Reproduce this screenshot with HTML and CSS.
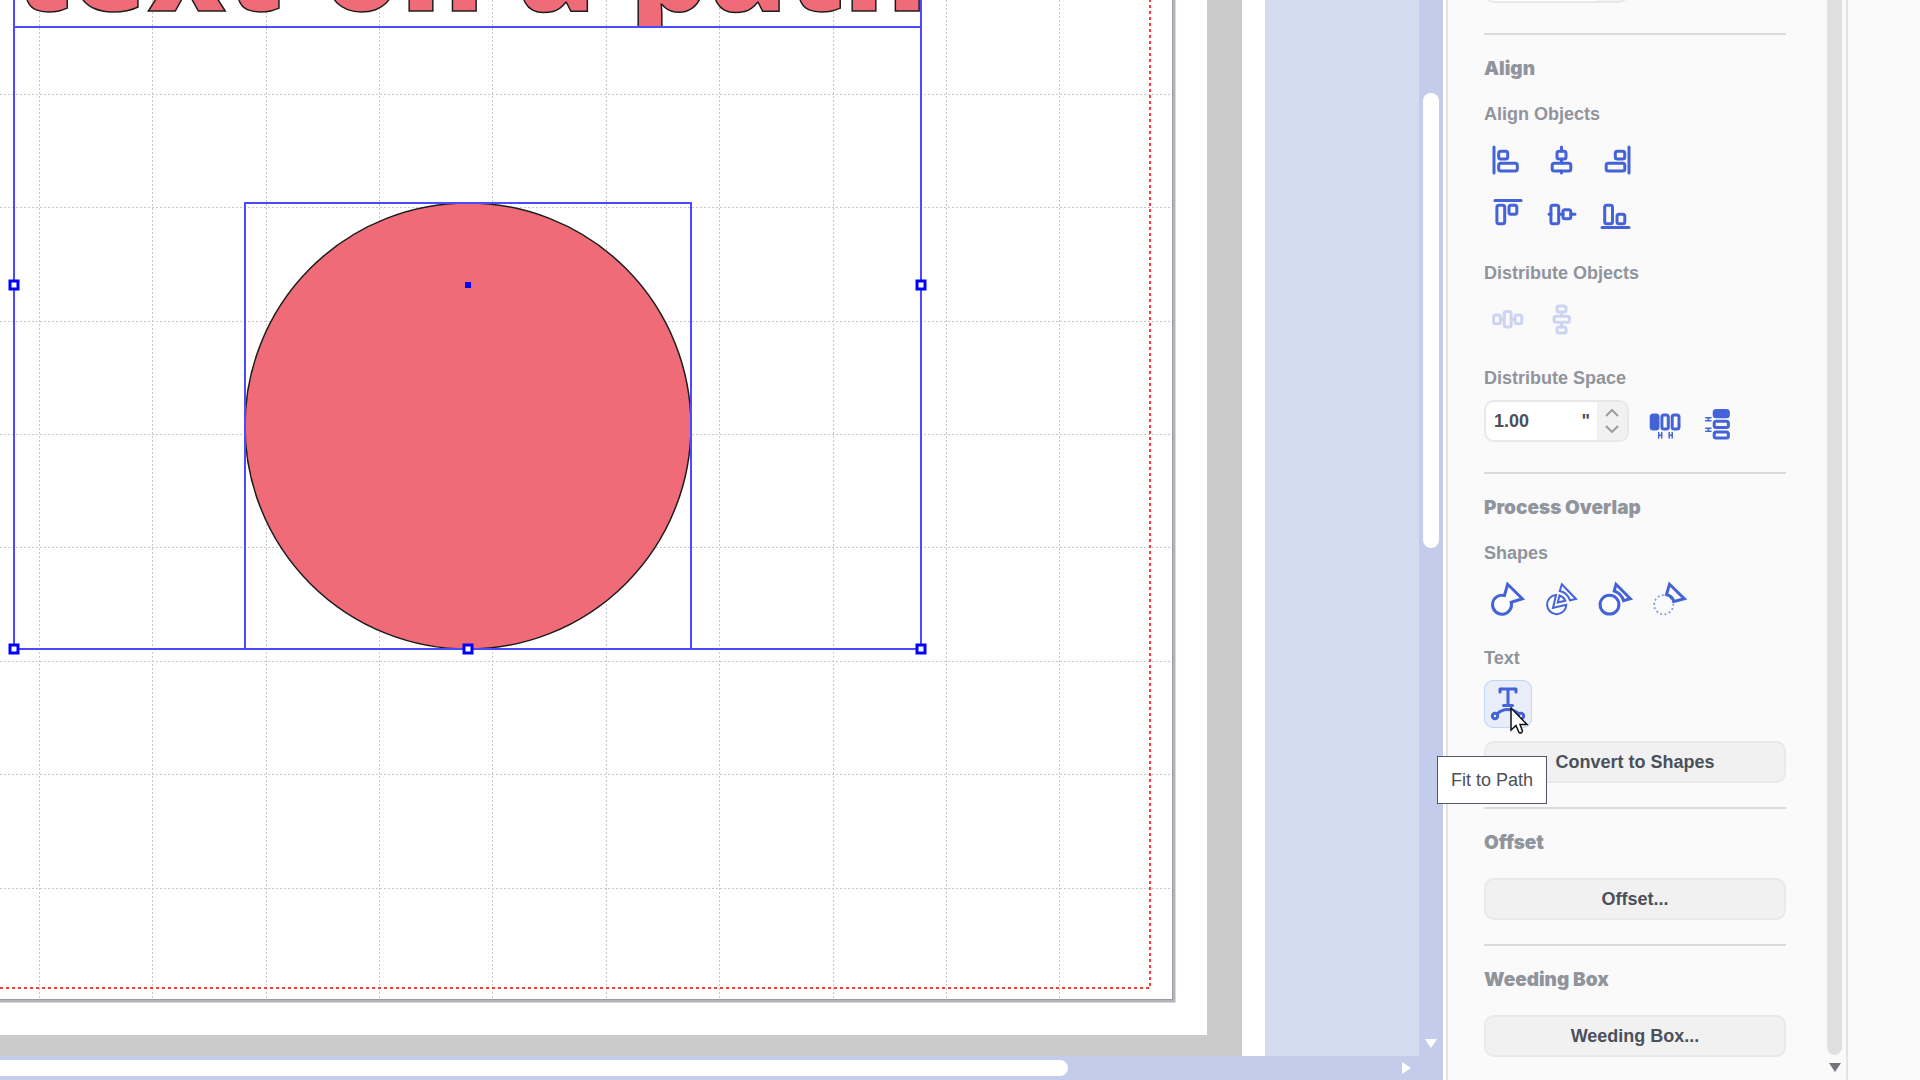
FILE: index.html
```html
<!DOCTYPE html>
<html lang="en">
<head>
<meta charset="utf-8">
<title>Text on a path</title>
<link rel="stylesheet" href="styles.css">
</head>
<body>
<div class="app">
  <main class="workspace">
    <svg class="artboard" role="img" aria-label="Drawing area">
      <defs>
        <clipPath id="textBox"><rect x="14" y="-140" width="908" height="168"/></clipPath>
      </defs>
      <rect width="1265" height="100%" fill="#fff"/>
      <rect width="1242" height="100%" fill="#cbcbcb"/>
      <rect width="1207" height="1035" fill="#fff"/>
      <path d="M0 1001H1174V0" fill="none" stroke="#b4b4b8" stroke-width="3"/>
      <path d="M0 999.500H1172.500V0" fill="none" stroke="#9a9aa6"/>
      <g class="grid">
        <path d="M39.500 0V999M152.500 0V999M266.500 0V999M379.500 0V999M492.500 0V999M606.500 0V999M719.500 0V999M833.500 0V999M946.500 0V999M1059.500 0V999"/>
        <path d="M0 94.500H1172M0 207.500H1172M0 321.500H1172M0 434.500H1172M0 547.500H1172M0 661.500H1172M0 774.500H1172M0 888.500H1172"/>
      </g>
      <path class="cut-border" d="M0 988H1150V0"/>
      <g class="shape-fill">
        <circle cx="468" cy="426" r="223"/>
        <g clip-path="url(#textBox)" class="path-text">
          <text x="14" y="11">text</text>
          <text x="322" y="11">on</text>
          <text x="518" y="11">a</text>
          <text x="630" y="11">path</text>
        </g>
      </g>
      <g class="selection">
        <path d="M14 0V649H921V0M14 27H921"/>
        <path d="M245 203H691V649H245Z"/>
      </g>
      <rect x="465" y="282" width="6" height="6" fill="#00f"/>
      <g class="handles">
        <rect x="10" y="281" width="8" height="8"/>
        <rect x="917" y="281" width="8" height="8"/>
        <rect x="10" y="645" width="8" height="8"/>
        <rect x="464" y="645" width="8" height="8"/>
        <rect x="917" y="645" width="8" height="8"/>
      </g>
    </svg>
    <div class="vscroll">
      <div class="vthumb"></div>
      <svg class="arrow-down" width="12" height="9"><path d="M0 0H12L6 9Z" fill="#fff"/></svg>
    </div>
    <div class="hscroll">
      <div class="hthumb"></div>
      <svg width="9" height="12"><path d="M0 0L9 6L0 12Z" fill="#fff"/></svg>
    </div>
  </main>

  <aside class="panel">
    <div class="sections">
      <div class="first"><div class="field"><span class="spin"></span></div></div>

      <section class="section">
        <h2>Align</h2>
        <h3>Align Objects</h3>
        <div class="icons">
          <button aria-label="Align left"><svg class="ico" viewBox="0 0 48 48"><path d="M10 11V37"/><rect x="14.700" y="15.200" width="9" height="7.800" rx="2"/><rect x="14.700" y="27.200" width="18.600" height="7.800" rx="2"/></svg></button>
          <button aria-label="Align centre"><svg class="ico" viewBox="0 0 48 48"><path d="M23.500 11V15M23.500 23V27M23.500 35V37"/><rect x="19" y="15.200" width="9" height="7.800" rx="2"/><rect x="14.200" y="27.200" width="18.600" height="7.800" rx="2"/></svg></button>
          <button aria-label="Align right"><svg class="ico" viewBox="0 0 48 48"><path d="M37 11V37"/><rect x="23.300" y="15.200" width="9.400" height="7.800" rx="2"/><rect x="14.200" y="27.200" width="18.600" height="7.800" rx="2"/></svg></button>
        </div>
        <div class="icons">
          <button aria-label="Align top"><svg class="ico" viewBox="0 0 48 48"><path d="M11 10.500H37"/><rect x="12.900" y="15.200" width="7.800" height="18.600" rx="2"/><rect x="25" y="15.200" width="7.800" height="9" rx="2"/></svg></button>
          <button aria-label="Align middle"><svg class="ico" viewBox="0 0 48 48"><path d="M11 24.300H13M21 24.300H25M33 24.300H37"/><rect x="12.900" y="15.200" width="7.800" height="18.600" rx="2"/><rect x="25" y="19.800" width="7.800" height="9" rx="2"/></svg></button>
          <button aria-label="Align bottom"><svg class="ico" viewBox="0 0 48 48"><path d="M10 37.500H37"/><rect x="12.700" y="15.200" width="7.800" height="18.600" rx="2"/><rect x="25" y="24.300" width="7.800" height="9.500" rx="2"/></svg></button>
        </div>
        <h3 class="next">Distribute Objects</h3>
        <div class="icons">
          <button disabled aria-label="Distribute horizontally"><svg class="ico" viewBox="0 0 48 48"><path d="M17 24.300H20M27 24.300H31"/><rect x="9.600" y="20" width="6.800" height="8.800" rx="2"/><rect x="20.300" y="16.600" width="6.800" height="15.500" rx="2"/><rect x="31" y="20" width="6.800" height="8.800" rx="2"/></svg></button>
          <button disabled aria-label="Distribute vertically"><svg class="ico" viewBox="0 0 48 48"><path d="M23.500 17V21M23.500 28V32"/><rect x="19" y="11" width="9" height="6" rx="2"/><rect x="16" y="21.300" width="15.400" height="6" rx="2"/><rect x="19" y="32" width="9" height="6" rx="2"/></svg></button>
        </div>
        <h3 class="next">Distribute Space</h3>
        <div class="field-row">
          <div class="field">
            <input type="text" value="1.00" aria-label="Distribute space in inches">
            <span class="unit">"</span>
            <span class="spin">
              <button aria-label="Increase"><svg viewBox="0 0 14 8"><path d="M1 7L7 1L13 7"/></svg></button>
              <button aria-label="Decrease"><svg viewBox="0 0 14 8"><path d="M1 1L7 7L13 1"/></svg></button>
            </span>
          </div>
          <div class="icons">
            <button aria-label="Space horizontally"><svg class="ico" viewBox="0 0 48 48"><rect class="solid" x="10.200" y="15" width="6.800" height="14" rx="2"/><rect x="20.900" y="15" width="6.400" height="14" rx="2"/><rect x="31.200" y="15" width="6.800" height="14" rx="2"/><path class="thin" d="M17.700 32.500V38M20.700 32.500V38M17.700 35.200H20.700M28.200 32.500V38M31.200 32.500V38M28.200 35.200H31.200"/></svg></button>
            <button aria-label="Space vertically"><svg class="ico" viewBox="0 0 48 48"><rect class="solid" x="19.200" y="10.600" width="14.200" height="6.200" rx="2"/><rect x="19.200" y="21.300" width="14.200" height="6.200" rx="2"/><rect x="19.200" y="31.900" width="14.200" height="6.200" rx="2"/><path class="thin" d="M10.700 17.700H16M10.700 20.700H16M13.400 17.700V20.700M10.700 28.200H16M10.700 31.200H16M13.400 28.200V31.200"/></svg></button>
          </div>
        </div>
      </section>

      <section class="section">
        <h2>Process Overlap</h2>
        <h3>Shapes</h3>
        <div class="icons">
          <button aria-label="Weld"><svg class="ico white" viewBox="0 0 48 48"><path d="M20.500 20.500L23.600 9.300L38.300 23.800L27.200 27.200A9.500 9.500 0 1 1 20.500 20.500Z"/></svg></button>
          <button aria-label="Divide"><svg class="ico white mid" viewBox="0 0 48 48"><path d="M18 20A9.600 9.600 0 1 0 28.300 29.800L15 33Z"/><path d="M23.800 9.300L38 24L32 25.300A14 14 0 0 0 21.800 16Z"/><path d="M21.500 20.500L19.800 27.500L27.300 25.800A9 9 0 0 0 21.500 20.500Z"/></svg></button>
          <button aria-label="Remove overlap"><svg class="ico white" viewBox="0 0 48 48"><circle cx="17.500" cy="29.700" r="9.400"/><path d="M24 9.300L38.300 23.800L31.500 25.700A14 14 0 0 0 22.200 16Z"/></svg></button>
          <button aria-label="Subtract"><svg class="ico white" viewBox="0 0 48 48"><circle class="dots" cx="17.700" cy="29.700" r="9.600"/><path d="M23.500 9.300L38.300 23.800L28 26.500A11 11 0 0 0 20.500 19.500Z"/></svg></button>
        </div>
        <h3 class="next">Text</h3>
        <div class="icons">
          <div class="hover-target">
            <button class="active" aria-label="Fit to Path" aria-describedby="tip"><svg class="ico" viewBox="0 0 48 48"><path d="M16 12V9H32V12M24 9V25.500M19.500 25.500H28.500"/><path d="M13.500 33.500C19 28 28 28 34.500 33.500"/><circle cx="11" cy="36" r="2.700"/><circle cx="37" cy="36" r="2.700"/></svg></button>
            <svg class="cursor" width="20" height="29" viewBox="0 0 20 29"><path d="M1 1V23L6 18.500L9 25.500Q12 27 12.500 24L10 17.500H17Z" fill="#fff" stroke="#111" stroke-width="1.500"/></svg>
            <span class="tooltip" id="tip" role="tooltip">Fit to Path</span>
          </div>
        </div>
        <button class="wide near">Convert to Shapes</button>
      </section>

      <section class="section">
        <h2>Offset</h2>
        <button class="wide">Offset...</button>
      </section>

      <section class="section">
        <h2>Weeding Box</h2>
        <button class="wide">Weeding Box...</button>
      </section>
    </div>
    <div class="panel-scroll">
      <div class="panel-thumb"></div>
      <svg width="12" height="9"><path d="M0 0H12L6 9Z" fill="#72757c"/></svg>
    </div>
  </aside>
  <div class="gutter"></div>
</div>
</body>
</html>
```
FILE: styles.css
```css
* { box-sizing: border-box; }
body { margin: 0; background: #fafafa; font-family: "Liberation Sans", Arial, sans-serif; font-size: 18px; color: #4b505a; overflow: hidden; }
.app { display: flex; height: 100vh; }

/* drawing area */
.workspace { flex: 1; min-width: 0; display: grid; grid-template: 1fr 24px / 1fr 24px; background: #c3cdeb; }
.artboard { width: 100%; height: 100%; background: #d3dbee; }
.grid path { fill: none; stroke: #c8c8c8; stroke-dasharray: 2 2; }
.cut-border { fill: none; stroke: #ff3b3b; stroke-width: 2; stroke-dasharray: 3 3; }
.shape-fill { fill: #ef6b78; stroke: #1c1c1c; stroke-width: 1.5; }
.path-text { font-family: "Open Sans", sans-serif; font-weight: 800; font-size: 124px; }
.selection path { fill: none; stroke: #4a4aff; stroke-width: 2; }
.handles rect { fill: #fff; stroke: #00f; stroke-width: 3; }
.vscroll { display: flex; flex-direction: column; align-items: center; padding: 93px 0 8px; }
.vthumb { width: 16px; height: 455px; border-radius: 8px; background: #fff; }
.arrow-down { margin-top: auto; }
.hscroll { grid-column: 1 / -1; display: flex; align-items: center; justify-content: space-between; padding-right: 32px; }
.hthumb { width: 75.7%; height: 16px; border-radius: 0 8px 8px 0; background: #fff; }

/* side panel */
.panel { width: 402px; flex: none; display: flex; border: solid #e3e3e6; border-width: 0 2px; margin-left: 3px; box-shadow: -3px 0 #fff; }
.sections { flex: 1; padding: 0 41px 0 36px; }
.panel-scroll { width: 19px; display: flex; flex-direction: column; align-items: center; gap: 8px; padding: 0 4px 8px 0; }
.panel-thumb { flex: 1; width: 15px; border-radius: 0 0 8px 8px; background: #dfe0e2; }
.gutter { width: 72px; flex: none; }
.first { display: flex; align-items: flex-end; height: 33px; padding-bottom: 30px; }
.first .spin { margin-left: auto; }
.section { border-top: 2px solid #dadbde; padding: 20px 0 24px; }
h2, h3 { margin: 0; color: #90949c; font-weight: bold; }
h2 { font-family: Inter, sans-serif; font-weight: 900; font-size: 19px; line-height: 28px; }
h3 { font-size: 18px; line-height: 24px; margin: 19px 0 10px; }
h3.next { margin-top: 23px; }
button { font: inherit; color: inherit; padding: 0; border: 0; background: none; }
.icons { display: flex; gap: 6px; }
.icons + .icons { margin-top: 6px; }
.icons button { width: 48px; height: 48px; display: block; }
.ico { width: 48px; height: 48px; display: block; fill: none; stroke: #4463d8; stroke-width: 3; stroke-linecap: round; stroke-linejoin: round; }
button:disabled .ico { stroke: #ccd4f2; }
.ico .solid { fill: #4463d8; }
.ico .thin { stroke-width: 1.5; }
.white { fill: #fff; stroke-linejoin: miter; }
.mid { stroke-width: 2; }
.ico .dots { fill: none; stroke: #7d93e6; stroke-width: 2; stroke-dasharray: 0.1 4.3; }
.field-row { display: flex; gap: 12px; height: 48px; }
.field { display: flex; width: 145px; height: 42px; border: 2px solid #e8e8ea; border-radius: 10px; background: #fff; overflow: hidden; flex: none; }
.field input { flex: 1; min-width: 0; border: 0; padding: 0 0 0 8px; font: bold 18px "Liberation Sans", Arial, sans-serif; color: #4b505a; background: none; }
.unit { font-weight: bold; line-height: 38px; padding-right: 7px; }
.spin { width: 30px; background: #f1f1f1; display: flex; flex-direction: column; justify-content: space-evenly; align-items: center; }
.spin svg { width: 14px; height: 8px; display: block; fill: none; stroke: #9a9ca1; stroke-width: 2; }
.hover-target { position: relative; }
.icons .active { border: 1px solid #bfd6fb; border-radius: 9px; background: #e8edf7; }
.active .ico { margin: -1px; }
.cursor { position: absolute; left: 26px; top: 27px; z-index: 2; }
.tooltip { position: absolute; left: -47px; top: 76px; z-index: 2; width: 110px; height: 48px; border: 1px solid #50556a; background: #fff; font-size: 18px; line-height: 46px; text-align: center; white-space: nowrap; }
.wide { display: block; width: 100%; height: 42px; margin-top: 21px; border: 2px solid #e9e9eb; border-radius: 10px; background: #f1f1f1; font-weight: bold; }
.near { margin-top: 13px; }
```
